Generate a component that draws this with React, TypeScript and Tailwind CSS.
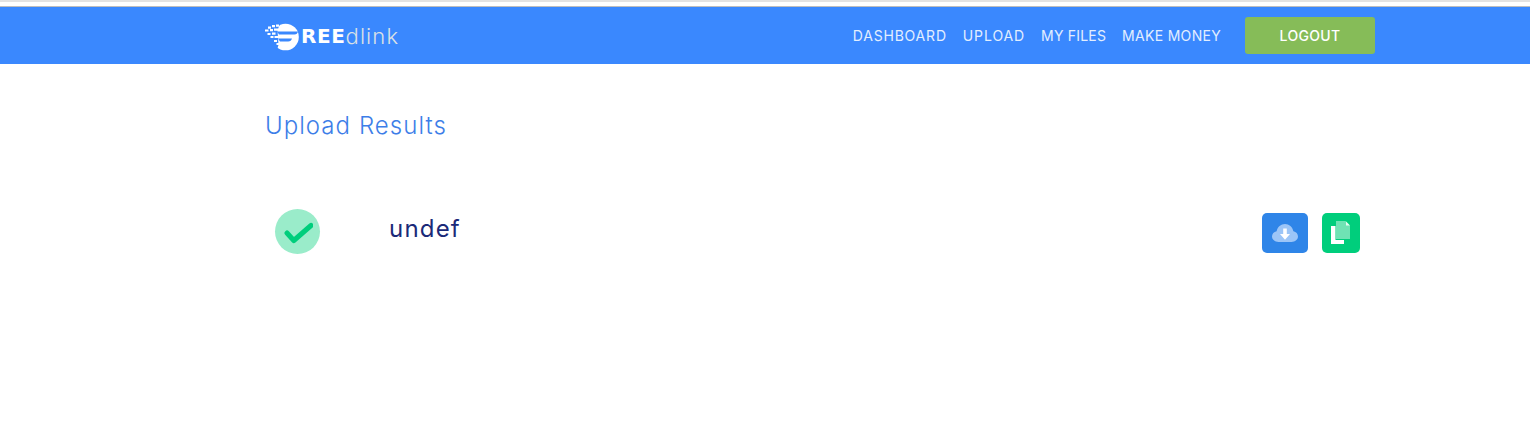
const font = "font-['Inter','Liberation_Sans',sans-serif]";

const navLinks = [
  { label: "DASHBOARD", spacing: "tracking-[0.8px]" },
  { label: "UPLOAD", spacing: "tracking-[0.9px]" },
  { label: "MY FILES", spacing: "tracking-[0.2px]" },
  { label: "MAKE MONEY", spacing: "tracking-[0.3px]" },
];

function LogoMark() {
  return (
    <svg width="36" height="30" viewBox="0 0 36 30" className="shrink-0">
      <circle cx="21.500" cy="16" r="13.300" fill="#fff" />
      <path d="M6 2h10.500L13.500 9l1 15-2 6H6z" fill="#3a88fe" />
      <path d="M13 10.500h21c-.4 1.800-1.600 3-3.500 3H15z" fill="#3a88fe" />
      <path d="M14 17.500h14c-.6 1.800-1.800 3-3.800 3H16z" fill="#3a88fe" />
      <path d="M4 5.500h3v2.200H4zM8 4h3v2.200H8zM12 3.500h3v2.200h-3zM1 8.500h3.500v2H1zM6 8h3v2.200H6zM10 7.500h4v2.200h-4zM3.500 12h3v2H3.500zM8 11.500h3.500v2.200H8zM6.500 15h3v2h-3zM10.500 15h3.500v2h-3.500zM10 19h3v2h-3zM12.500 22h3v2h-3z" fill="#fff" />
    </svg>
  );
}

function CheckBadge() {
  return (
    <div className="flex h-[45px] w-[45px] items-center justify-center rounded-full bg-[#9aecca]">
      <svg width="30" height="24" viewBox="0 0 30 24" fill="none">
        <path d="M4 13l6.800 7.500L28 5.500" stroke="#00ce7c" strokeWidth="5" strokeLinecap="round" strokeLinejoin="round" />
      </svg>
    </div>
  );
}

function CloudIcon() {
  return (
    <svg width="26" height="18" viewBox="0 0 26 18">
      <path d="M6.500 18C2.900 18 0 15.700 0 12.600c0-2.700 1.900-4.800 4.600-5.300C5.500 3 8.900 0 13 0s7.500 3 8.400 7.300c2.700.5 4.600 2.600 4.600 5.300 0 3.100-2.900 5.400-6.500 5.400z" fill="#9cc5f7" />
      <path d="M11.200 4.500h3.600v5.500h3.200L13 15.800 8 10h3.200z" fill="#fff" />
    </svg>
  );
}

function CopyIcon() {
  return (
    <svg width="20" height="24" viewBox="0 0 20 24">
      <path d="M0 5h4.500v14H13v4H0z" fill="#fff" />
      <path d="M5 0h9.500L19 4.500V18H5z" fill="#6fe3b4" />
      <path d="M15 .5 19 4.500h-4z" fill="#e6fbf2" />
    </svg>
  );
}

export default function App() {
  return (
    <div className={`${font} h-[436px] overflow-hidden bg-white`}>
      <div className="h-[2px] bg-[#e3e3e3]" />
      <div className="h-[4px] bg-white" />
      <div className="h-[1px] bg-[#bdbdbd]" />

      <header className="flex h-[57px] items-center bg-[#3a88fe] pl-[264px] pr-[155px]">
        <div className="flex items-center">
          <LogoMark />
          <span className="ml-[1px] font-['DejaVu_Sans',sans-serif] text-[20px] font-bold leading-none tracking-[0.6px] text-white">REE</span>
          <span className="text-[22px] font-light leading-none tracking-[1.1px] text-[#d9e0e6]">dlink</span>
        </div>
        <nav className="ml-auto flex items-center gap-4">
          {navLinks.map((link) => (
            <a key={link.label} className={`${link.spacing} whitespace-nowrap pb-[1px] text-[14px] font-normal text-[#e2eeff]`}>
              {link.label}
            </a>
          ))}
          <button className="ml-2 h-[37px] w-[130px] rounded-[3px] bg-[#86bc58] pb-[1px] text-[14px] font-medium tracking-[0.3px] text-white">
            LOGOUT
          </button>
        </nav>
      </header>

      <main className="pl-[265px] pr-[170px]">
        <h1 className="pt-[46px] text-[24px] font-light leading-[32px] tracking-[1.05px] text-[#3d7ee8]">Upload Results</h1>

        <div className="mt-[67px] flex items-center">
          <div className="w-[124px] pl-[10px]">
            <CheckBadge />
          </div>
          <span className="-mt-[6px] text-[24px] font-normal leading-[32px] tracking-[1.2px] text-[#1b2a78]">undef</span>
          <div className="ml-auto flex items-center gap-[14px] pt-[2px]">
            <button className="flex h-[40px] w-[46px] items-center justify-center rounded-[5px] bg-[#2f85e8]">
              <CloudIcon />
            </button>
            <button className="flex h-[40px] w-[38px] items-center justify-center rounded-[5px] bg-[#00ce7c]">
              <CopyIcon />
            </button>
          </div>
        </div>
      </main>
    </div>
  );
}
